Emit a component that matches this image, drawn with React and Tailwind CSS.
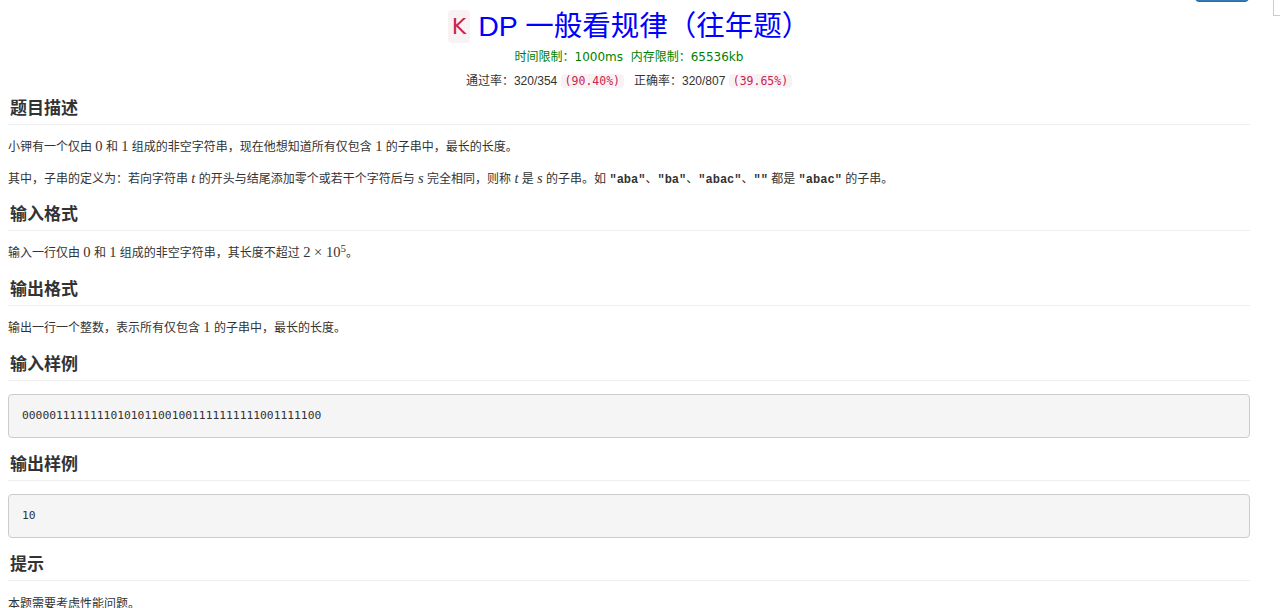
const sans = "font-['Liberation_Sans','Noto_Sans_CJK_SC',sans-serif]";

function M({ children, italic }) {
  return (
    <span
      className={`font-['Liberation_Serif',serif] text-[14.5px] leading-none text-[#333] ${
        italic ? "italic" : ""
      }`}
    >
      {children}
    </span>
  );
}

function Q({ children }) {
  return (
    <code className="font-['Liberation_Mono',monospace] font-bold text-[12px] leading-none text-[#333]">
      "{children}"
    </code>
  );
}

function Heading({ children, className = "" }) {
  return (
    <h3
      className={`text-[17px] leading-[24px] font-semibold text-[#333] pt-[3px] pb-[3px] border-b border-[#eee] pl-[2px] ${className}`}
    >
      {children}
    </h3>
  );
}

function Sample({ children }) {
  return (
    <pre className="mt-[13px] bg-[#f5f5f5] border border-[#ccc] rounded px-[13px] py-[11px] leading-5 text-[11.3px] text-[#333] font-['DejaVu_Sans_Mono',monospace]">
      {children}
    </pre>
  );
}

export default function App() {
  return (
    <div className={`relative bg-white min-h-[608px] overflow-hidden ${sans} text-[12px] text-[#333]`}>
      <div className="absolute left-[1195px] top-[-30px] w-[54px] h-[32px] rounded bg-[#337ab7] border border-[#2e6da4]" />
      <div className="absolute left-[1273px] top-[-10px] w-[20px] h-[26px] border border-[#ccc] bg-white" />

      <div className="ml-2 w-[1242px]">
        <h1 className="pt-[6px] flex items-center justify-center gap-2 leading-[40px]">
          <span className="bg-[#f9f2f4] text-[#c7254e] rounded text-[22px] leading-[33px] px-[4px] font-['DejaVu_Sans',sans-serif]">
            K
          </span>
          <span className="text-[28.5px] text-[#0000ff]">DP 一般看规律（往年题）</span>
        </h1>
        <div className="text-center text-[12px] leading-5 mt-[1px] text-[#008000] font-['DejaVu_Sans','Noto_Sans_CJK_SC',sans-serif]">
          时间限制：1000ms&nbsp; 内存限制：65536kb
        </div>
        <div className="text-center text-[12px] leading-5 mt-[4px] text-[#333]">
          通过率：320/354{" "}
          <code className="bg-[#f9f2f4] text-[#c7254e] rounded px-1 font-['DejaVu_Sans_Mono',monospace] text-[11.5px]">
            (90.40%)
          </code>
          &nbsp;&nbsp; 正确率：320/807{" "}
          <code className="bg-[#f9f2f4] text-[#c7254e] rounded px-1 font-['DejaVu_Sans_Mono',monospace] text-[11.5px]">
            (39.65%)
          </code>
        </div>

        <Heading className="mt-[3px]">题目描述</Heading>
        <p className="mt-3 leading-5">
          小钾有一个仅由 <M>0</M> 和 <M>1</M> 组成的非空字符串，现在他想知道所有仅包含 <M>1</M> 的子串中，最长的长度。
        </p>
        <p className="mt-3 leading-5">
          其中，子串的定义为：若向字符串 <M italic>t</M> 的开头与结尾添加零个或若干个字符后与 <M italic>s</M>{" "}
          完全相同，则称 <M italic>t</M> 是 <M italic>s</M> 的子串。如 <Q>aba</Q>、<Q>ba</Q>、<Q>abac</Q>、<Q></Q>{" "}
          都是 <Q>abac</Q> 的子串。
        </p>

        <Heading className="mt-[11px]">输入格式</Heading>
        <p className="mt-3 leading-5">
          输入一行仅由 <M>0</M> 和 <M>1</M> 组成的非空字符串，其长度不超过{" "}
          <M>
            2 × 10<sup className="text-[11px]">5</sup>
          </M>
          。
        </p>

        <Heading className="mt-3">输出格式</Heading>
        <p className="mt-3 leading-5">
          输出一行一个整数，表示所有仅包含 <M>1</M> 的子串中，最长的长度。
        </p>

        <Heading className="mt-3">输入样例</Heading>
        <Sample>00000111111110101011001001111111111001111100</Sample>

        <Heading className="mt-3">输出样例</Heading>
        <Sample>10</Sample>

        <Heading className="mt-3">提示</Heading>
        <p className="mt-[13px] leading-5">本题需要考虑性能问题。</p>
      </div>
    </div>
  );
}
